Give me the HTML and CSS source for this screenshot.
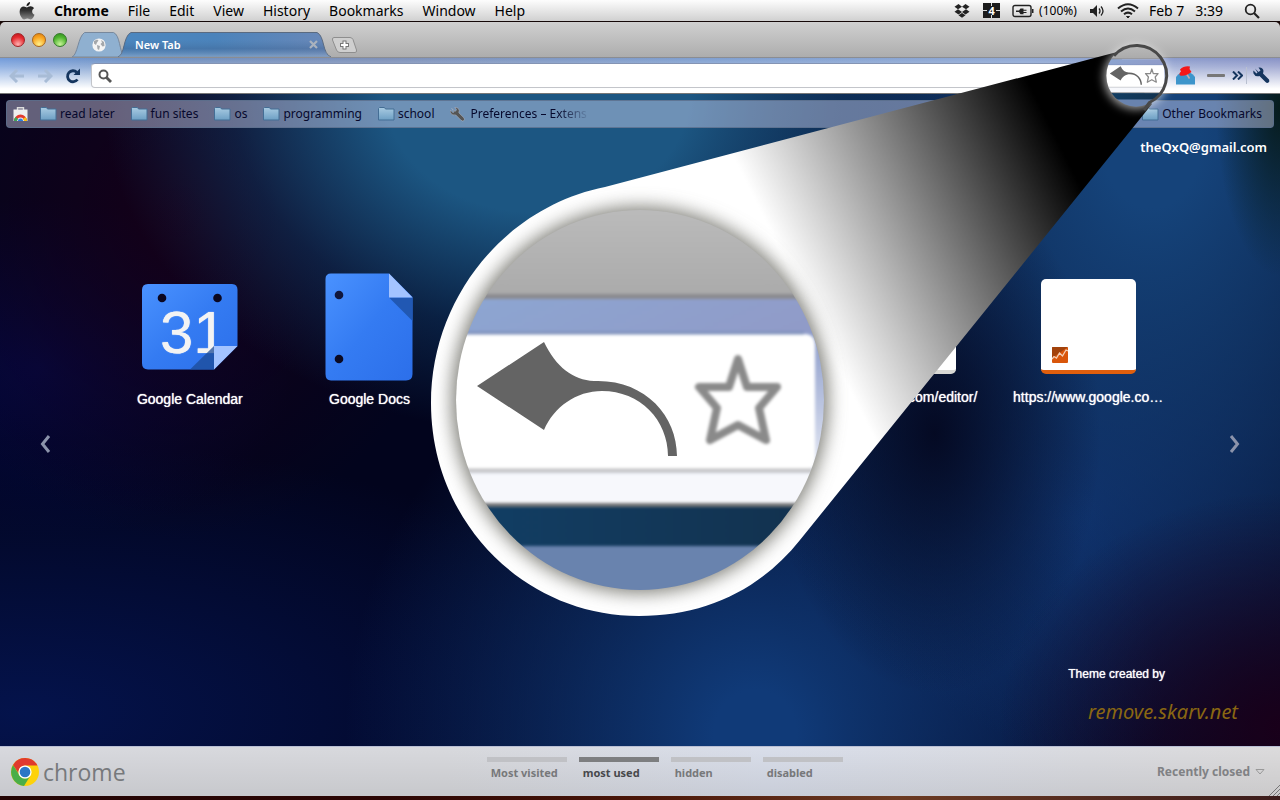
FILE: index.html
```html
<!DOCTYPE html>
<html lang="en">
<head>
<meta charset="utf-8">
<title>New Tab</title>
<link rel="stylesheet" href="styles.css">
</head>
<body>
<header class="menubar">
  <nav class="menus">
    <svg class="apple" width="16" height="18" viewBox="0 0 16 18"><defs><linearGradient id="ap" x2="0" y2="1"><stop offset="0" stop-color="#111"/><stop offset=".5" stop-color="#333"/><stop offset="1" stop-color="#888"/></linearGradient></defs><path fill="url(#ap)" d="M11 0C11.200 2 9.500 4.200 7.500 4.200C7.300 2.200 9 .3 11 0ZM7.800 5.400C8.600 5.400 9.800 4.300 11.600 4.300C12.900 4.300 14.200 5 15 6.200C12.300 7.800 12.700 11.600 15.500 12.700C14.700 14.900 13.300 17.400 11.700 17.400C10.400 17.400 10 16.600 8.400 16.600C6.700 16.600 6.300 17.400 5.100 17.400C3.100 17.400.6 13.300.6 9.800C.6 6.300 2.700 4.500 4.800 4.500C6.200 4.500 7.200 5.400 7.800 5.400Z"/></svg>
    <button class="menu strong">Chrome</button><button class="menu">File</button><button class="menu">Edit</button><button class="menu">View</button><button class="menu">History</button><button class="menu">Bookmarks</button><button class="menu">Window</button><button class="menu">Help</button>
  </nav>
  <div class="status">
    <svg width="18" height="16" viewBox="0 0 16 16" fill="#222"><path d="M4.500 1L8 3.700L4 6.300L.5 3.700ZM11.500 1L15.500 3.700L12 6.300L8 3.700ZM.5 8.700L4 6.300L8 8.900L4.500 11.400ZM15.500 8.700L12 6.300L8 8.900L11.500 11.400ZM4.500 12.300L8 9.900L11.500 12.300L8 14.800Z"/></svg>
    <span class="spaces">4</span>
    <svg width="22" height="14" viewBox="0 0 22 14"><rect x="1" y="1.500" width="18" height="11" rx="2" fill="none" stroke="#222" stroke-width="1.400"/><path d="M20 5h1.500v4H20zM4 6.500h3L8.500 4.500h3v1.300h3v1h-3v1.200h3v1h-3v1.300h-3L7 8H4z" fill="#222"/></svg>
    <span class="charge">(100%)</span>
    <svg class="sound" width="16" height="14" viewBox="0 0 16 14"><path d="M1 5h3l4-4v12L4 9H1z" fill="#222"/><path d="M10 4.500q2 2.500 0 5M12 2.500q4 4.500 0 9" fill="none" stroke="#222" stroke-width="1.300"/></svg>
    <svg width="22" height="16" viewBox="0 0 22 16" fill="none" stroke="#222" stroke-width="2"><path d="M1 5.500Q11-3 21 5.500M4 8.500Q11 2.500 18 8.500M7 11.300Q11 8 15 11.300"/><path d="M9.500 13.500h3L11 15z" fill="#222" stroke-width="1"/></svg>
    <span class="clock">Feb 7&nbsp;&nbsp; 3:39</span>
    <svg class="spot" width="16" height="16" viewBox="0 0 16 16" fill="none" stroke="#222" stroke-width="1.800"><circle cx="6.500" cy="6.500" r="4.800"/><path d="M10 10l5 5" stroke-width="2.200"/></svg>
  </div>
</header>

<div class="window">
  <div class="tabstrip">
    <div class="lights"><button class="light red" aria-label="Close"></button><button class="light amber" aria-label="Minimize"></button><button class="light green" aria-label="Zoom"></button></div>
    <button class="tab pinned" aria-label="Pinned tab">
      <svg class="tabshape" viewBox="0 0 56 25" preserveAspectRatio="none"><path d="M0 25C6 23 6 5 13 .5H43C50 3 49 19 54 25Z" fill="#8fb0d0" stroke="#76879b"/></svg>
      <svg class="globe" width="14" height="14" viewBox="0 0 14 14"><circle cx="7" cy="7" r="6.600" fill="#f4f4f4"/><path d="M2 3l3-1.500 1.500 1L5 4.500 4 7 2 5.500zM5 7l3 1-1 4-1.500-1zM9 2l3 2 .5 4-2 .5L8.500 6 10 4.500z" fill="#a3a7ab"/></svg>
    </button>
    <div class="tab active">
      <svg class="tabshape" viewBox="0 0 214 25" preserveAspectRatio="none"><defs><linearGradient id="tb" x2="1"><stop offset="0" stop-color="#4b87c0"/><stop offset=".45" stop-color="#4b83bb"/><stop offset="1" stop-color="#6a88b8"/></linearGradient><linearGradient id="ts" x2="0" y2="1"><stop offset=".3" stop-color="#47739f" stop-opacity="0"/><stop offset=".65" stop-color="#3e6290" stop-opacity=".4"/><stop offset="1" stop-color="#9db5d3" stop-opacity=".6"/></linearGradient></defs><path d="M0 25C7 23 5 4 13 .5H199C207 4 204 22 213 25Z" fill="url(#tb)" stroke="#5a6a80"/><path d="M0 25C7 23 5 4 13 .5H199C207 4 204 22 213 25Z" fill="url(#ts)"/></svg>
      <span class="tabname">New Tab</span><button class="tabclose" aria-label="Close tab"><svg width="9" height="9" viewBox="0 0 9 9"><path d="M1 1l7 7M8 1L1 8" stroke="#aab2bd" stroke-width="2.200"/></svg></button>
    </div>
    <button class="newtab" aria-label="New tab"><svg width="28" height="17" viewBox="0 0 28 17"><path d="M4 .5H20Q22 .5 23 2.500L26.500 13Q27 15.500 25 15.500H10Q7.500 15.500 6.500 13L2.500 3Q2 .5 4 .5Z" fill="#cfcfcf" stroke="#8e8e8e"/><path d="M14.500 3.500v9M10 8h9" stroke="#777" stroke-width="4"/><path d="M14.500 4.500v7M11 8h7" stroke="#fff" stroke-width="2"/></svg></button>
  </div>

  <div class="toolbar">
    <button class="tool" aria-label="Back"><svg width="16" height="14" viewBox="0 0 16 14" fill="none" stroke="#a8bcd6" stroke-width="3"><path d="M8 1L2 7l6 6M2 7h13"/></svg></button>
    <button class="tool" aria-label="Forward"><svg width="16" height="14" viewBox="0 0 16 14" fill="none" stroke="#a8bcd6" stroke-width="3"><path d="M8 1l6 6-6 6M14 7H1"/></svg></button>
    <button class="tool" aria-label="Reload"><svg width="16" height="16" viewBox="0 0 16 16"><path d="M12.500 11.500A5.500 5.500 0 1 1 11.800 4.200" fill="none" stroke="#15355e" stroke-width="2.800"/><path d="M15 .5V7H8.500z" fill="#15355e"/></svg></button>
    <label class="omnibox"><svg width="14" height="14" viewBox="0 0 14 14" fill="none" stroke="#555"><circle cx="5.500" cy="5.500" r="4" stroke-width="2"/><path d="M8.500 8.500l4.500 4.500" stroke-width="2.800"/></svg><input type="text" aria-label="Address"></label>
    <div class="extensions">
      <button class="tool" aria-label="Pin"><svg width="19" height="19" viewBox="0 0 19 19"><path d="M0 18.500V11Q4 5.500 9.500 5.500Q15 5.500 19 11V18.500Z" fill="#3d95cb"/><path d="M10 7l3.500 5.500" stroke="#c9a9a9" stroke-width="1.500"/><path d="M4 3.500Q8-.5 14 .5L13.500 3L15.500 6Q10 10.500 4 9.500Q2.500 7.500 5 5.500Z" fill="#f41818"/></svg></button>
      <button class="tool dash" aria-label="Extension"><svg width="18" height="4" viewBox="0 0 18 4"><rect width="18" height="3" rx="1" fill="#777"/></svg></button>
      <button class="tool" aria-label="More extensions"><svg width="11" height="9" viewBox="0 0 11 9" fill="none" stroke="#15355e" stroke-width="2"><path d="M1 .5l4 4-4 4M6 .5l4 4-4 4"/></svg></button>
      <span class="divider"></span>
      <button class="tool" aria-label="Settings"><svg width="17" height="17" viewBox="0 0 17 17"><path d="M2 1.500L5.500 5L7.500 3.500L5.500.5Q10 0 10.500 4L10 6.500L16 12.500Q17 14.500 15.500 15.500Q14 16.500 12.500 15L6.500 9Q2 10 .5 6.500Q0 4.500.5 3.500L3.500 6.500L4.500 5.500Z" fill="#15355e"/></svg></button>
    </div>
  </div>

  <svg class="defs" width="0" height="0"><defs><linearGradient id="fg" x2="0" y2="1"><stop offset="0" stop-color="#a9cbe2"/><stop offset="1" stop-color="#6d9fc4"/></linearGradient><symbol id="folder" viewBox="0 0 17 14"><path d="M.5 13V1.500L1.500.5H6.500L7.500 2H16V13Z" fill="url(#fg)" stroke="#446e95"/></symbol></defs></svg>

  <main class="page">
    <nav class="bookmarks">
      <a class="store" href="#" aria-label="Web Store"><svg width="15" height="15" viewBox="0 0 15 15"><path d="M4.500 3V.8h6V3" fill="none" stroke="#ddd" stroke-width="1.400"/><path d="M.5 2.500h14v11.500H.5z" fill="#eee"/><path d="M1 14a6.500 6.500 0 0 1 13 0h-3a3.500 3.500 0 0 0-7 0z" fill="#e33b2e"/><path d="M1 14a6.500 6.500 0 0 1 1.500-4L5 12q-1 1-1 2z" fill="#3aa757"/><path d="M14 14a6.500 6.500 0 0 0-1.500-4L10 12q1 1 1 2z" fill="#fbc116"/><path d="M5 14a2.500 2.500 0 0 1 5 0z" fill="#2d7de0"/></svg></a>
      <a href="#"><svg width="17" height="14"><use href="#folder" width="17" height="14"/></svg>read later</a>
      <a href="#"><svg width="17" height="14"><use href="#folder" width="17" height="14"/></svg>fun sites</a>
      <a href="#"><svg width="17" height="14"><use href="#folder" width="17" height="14"/></svg>os</a>
      <a href="#"><svg width="17" height="14"><use href="#folder" width="17" height="14"/></svg>programming</a>
      <a href="#"><svg width="17" height="14"><use href="#folder" width="17" height="14"/></svg>school</a>
      <a href="#" class="prefs"><svg width="15" height="15" viewBox="0 0 17 17"><path d="M2 1.500L5.500 5L7.500 3.500L5.500.5Q10 0 10.500 4L10 6.500L16 12.500Q17 14.500 15.500 15.500Q14 16.500 12.500 15L6.500 9Q2 10 .5 6.500Q0 4.500.5 3.500L3.500 6.500L4.500 5.500Z" fill="#555" stroke="#b5bccb" stroke-width=".6"/></svg><span class="fade">Preferences – Extens</span></a>
      <a href="#" class="other"><svg width="17" height="14"><use href="#folder" width="17" height="14"/></svg>Other Bookmarks</a>
    </nav>
    <a class="account" href="#">theQxQ@gmail.com</a>

    <section class="apps">
      <button class="pager" aria-label="Previous"><svg width="12" height="20" viewBox="0 0 12 20"><path d="M10 2L3.500 10L10 18" fill="none" stroke="#8b93ab" stroke-width="3"/></svg></button>
      <div class="tiles">
        <a class="tile app" href="#"><span class="art"><svg width="96" height="86" viewBox="0 0 96 86"><defs><linearGradient id="bl" x2="1" y2="1"><stop offset="0" stop-color="#4a92ff"/><stop offset=".5" stop-color="#347bf2"/><stop offset="1" stop-color="#2c6fea"/></linearGradient></defs><path d="M6 0H90Q95.500 0 95.500 6V62L72 85.500H6Q0 85.500 0 79V6Q0 0 6 0Z" fill="url(#bl)"/><circle cx="20" cy="14" r="4.300" fill="#0b0720"/><circle cx="75.500" cy="14" r="4.300" fill="#0b0720"/><text class="date" x="18" y="69">31</text><path d="M72 62V85.500H48Z" fill="#1c4b96" fill-opacity=".75"/><path d="M72 62H95.500L72 85.500Z" fill="#a3c3ff"/></svg></span>Google Calendar</a>
        <a class="tile app" href="#"><span class="art"><svg width="88" height="108" viewBox="0 0 88 108"><path d="M6 .5H64L87.500 24V101Q87.500 107.500 81 107.500H6Q.5 107.500.5 101V6Q.5.5 6 .5Z" fill="url(#bl)"/><circle cx="14" cy="22" r="4.300" fill="#10163c"/><circle cx="14" cy="86" r="4.300" fill="#0b0a22"/><path d="M64 24.500H87.500V48Z" fill="#2158b3"/><path d="M64 .5L87.500 24.500H64Z" fill="#a3c3ff"/></svg></span>Google Docs</a>
        <a class="tile editor" href="#"><span class="art"><span class="card"></span></span>.com/editor/</a>
        <a class="tile" href="#"><span class="art"><span class="card analytics"><svg width="16" height="16" viewBox="0 0 16 16"><rect width="16" height="16" rx="1" fill="#d9560b"/><path d="M0 0H16L0 11Z" fill="#8a3b0c" fill-opacity=".7"/><path d="M0 12l2-2.500 2.500 1.500L7.500 6l3 3L14 3l2 1" fill="none" stroke="#f3d0b8" stroke-width="1.300"/></svg></span></span>https://www.google.co…</a>
      </div>
      <button class="pager" aria-label="Next"><svg width="12" height="20" viewBox="0 0 12 20"><path d="M2 2L8.500 10L2 18" fill="none" stroke="#8b93ab" stroke-width="3"/></svg></button>
    </section>

    <div class="credit"><span>Theme created by</span><a href="#">remove.skarv.net</a></div>
  </main>

  <footer class="dock">
    <div class="brand"><svg width="28" height="28" viewBox="0 0 28 28"><circle cx="14" cy="14" r="14" fill="#fdd20b"/><path d="M2 7A14 14 0 0 1 26.500 7.500H14A6.500 6.500 0 0 0 7.700 15.500Z" fill="#e03a2d"/><path d="M2 7A14 14 0 0 0 13 28L19.500 17.500A6.500 6.500 0 0 1 8 16.500Z" fill="#4aae48"/><circle cx="14" cy="14" r="6.600" fill="#fff"/><circle cx="14" cy="14" r="5.300" fill="#2b77c5"/></svg><span>chrome</span></div>
    <nav class="sections"><button>Most visited</button><button class="on">most used</button><button>hidden</button><button>disabled</button></nav>
    <button class="recent">Recently closed<svg width="10" height="6" viewBox="0 0 10 6"><path d="M1 .5H9L5 5Z" fill="none" stroke="#999"/></svg></button>
    <svg class="grip" width="12" height="12" viewBox="0 0 12 12" stroke="#777"><path d="M1 12L12 1M5 12L12 5M9 12L12 9"/></svg>
  </footer>
</div>

<svg class="magnifier" viewBox="0 0 1280 800" aria-hidden="true">
  <defs>
    <linearGradient id="beam" gradientUnits="userSpaceOnUse" x1="745" y1="180" x2="1011" y2="47"><stop offset="0" stop-color="#fff"/><stop offset="1" stop-color="#000"/></linearGradient>
    <linearGradient id="strip" x2="0" y2="1"><stop offset="0" stop-color="#bebebe"/><stop offset="1" stop-color="#aaa"/></linearGradient>
    <linearGradient id="blue" x2="1" y2=".2"><stop offset="0" stop-color="#8ca6d2"/><stop offset="1" stop-color="#909bc8"/></linearGradient>
    <linearGradient id="side" x2="0" y2="1"><stop offset="0" stop-color="#8c9cca"/><stop offset="1" stop-color="#fafbfe"/></linearGradient>
    <linearGradient id="navy" x2="1"><stop offset="0" stop-color="#113f66"/><stop offset="1" stop-color="#12304c"/></linearGradient>
    <filter id="soft" x="-20%" y="-20%" width="140%" height="140%" color-interpolation-filters="sRGB"><feGaussianBlur stdDeviation="1.500"/></filter>
    <filter id="shade" x="-20%" y="-20%" width="140%" height="140%"><feGaussianBlur stdDeviation="9"/></filter>
    <filter id="glow" x="-50%" y="-50%" width="200%" height="200%"><feGaussianBlur stdDeviation="5"/></filter>
    <clipPath id="disc"><ellipse cx="640" cy="400" rx="184" ry="190"/></clipPath>
    <clipPath id="body"><path d="M1117 52L605 187C505 207 431 298 431 403C431 522 524 616 639 616C705 616 760 590 800 540L1152 104Z"/></clipPath>
    <g id="view" clip-path="url(#disc)"><g filter="url(#soft)">
      <rect x="440" y="190" width="400" height="107" fill="url(#strip)"/>
      <rect x="440" y="294" width="400" height="5" fill="#8b8b90"/>
      <rect x="440" y="299" width="400" height="36" fill="url(#blue)"/>
      <rect x="440" y="333" width="400" height="170" fill="url(#side)"/>
      <rect x="440" y="474" width="400" height="30" fill="#f7f8fc"/>
      <path d="M430 334H804Q815 334 815 345V460Q815 470 804 470H430Z" fill="#fff"/>
      <path d="M430 333H804" stroke="#7f91bb" stroke-width="3"/>
      <path d="M430 470.500H812" stroke="#c4c4c6" stroke-width="4"/>
      <rect x="440" y="503" width="400" height="5" fill="#747678"/>
      <rect x="440" y="507" width="400" height="42" fill="url(#navy)"/>
      <rect x="440" y="546" width="400" height="60" fill="#6983ae"/>
      <path d="M738 359L747 387H777L759 408L766 440L738 425L710 440L717 408L699 387H729Z" fill="none" stroke="#8a8a8a" stroke-width="8" stroke-linejoin="round"/>
    </g><path d="M477 386L544 342C556 367 573 380 594 381C644 379 677 415 677 456H668C668 420 640 391 602 391C576 391 554 407 544 430Z" fill="#646464"/></g>
  </defs>
  <path d="M1117 52L605 187C505 207 431 298 431 403C431 522 524 616 639 616C705 616 760 590 800 540L1152 104Z" fill="url(#beam)"/>
  <g clip-path="url(#body)"><ellipse cx="640" cy="400" rx="188" ry="193" fill="#7d7d76" filter="url(#shade)"/></g>
  <use href="#view"/>
  <circle cx="1136" cy="77" r="32" fill="#fff" fill-opacity=".65" filter="url(#glow)"/>
  <use href="#view" transform="matrix(.161 0 0 .163 1033 10.500)"/>
  <path d="M1114 55.700A30 30 0 1 1 1149.500 102.500L1144 110" fill="none" stroke="#484848" stroke-width="3"/>
</svg>
<div class="desktop"></div>
</body>
</html>
```

FILE: styles.css
```css
* { box-sizing: border-box; }
body {
  margin: 0;
  min-height: 100vh;
  display: flex;
  flex-direction: column;
  position: relative;
  background: #1a0806;
  font-family: "Noto Sans", "Open Sans", sans-serif;
  overflow-x: hidden;
}
button { border: 0; padding: 0; background: none; font: inherit; color: inherit; }
a { color: inherit; text-decoration: none; }
svg { display: block; flex: none; }
.defs { position: absolute; }

.menubar {
  height: 22px;
  display: flex;
  justify-content: space-between;
  align-items: center;
  padding: 0 20px 0 19px;
  background: linear-gradient(#fdfdfd, #d0d0d0);
  border-bottom: 1px solid #150808;
  font-size: 14px;
  line-height: 20px;
  color: #000;
  white-space: nowrap;
}
.menus, .status { display: flex; align-items: center; }
.menus { gap: 19px; }
.strong { font-weight: 700; }
.status { gap: 12px; }
.spaces {
  width: 17px;
  height: 15px;
  background:
    linear-gradient(#ddd, #ddd) 50% 0 / 1px 3px no-repeat,
    linear-gradient(#ddd, #ddd) 50% 100% / 1px 3px no-repeat,
    linear-gradient(#ddd, #ddd) 0 50% / 4px 1px no-repeat,
    linear-gradient(#ddd, #ddd) 100% 50% / 4px 1px no-repeat,
    #1c1c1c;
  color: #fff;
  font-size: 11px;
  line-height: 15px;
  font-weight: 700;
  text-align: center;
}
.charge { font-size: 12px; margin-left: -7px; }
.clock { margin: 0 9px 0 -2px; }

.window { flex: 1; display: flex; flex-direction: column; }
.tabstrip {
  height: 36px;
  display: flex;
  align-items: flex-end;
  padding-left: 11px;
  background: linear-gradient(#d0d0d0, #adadad);
  border-radius: 5px 5px 0 0;
  border-bottom: 1px solid #8b8d92;
}
.lights { display: flex; gap: 7px; align-self: center; margin-right: 5px; }
.light { width: 14px; height: 14px; border-radius: 50%; border: 1px solid; }
.red { background: radial-gradient(circle at 50% 85%, #ffb0b0, #e52b30 60%, #b9141b); border-color: #a02226; }
.amber { background: radial-gradient(circle at 50% 85%, #fff08a, #f9a41f 60%, #d97b10); border-color: #a8661c; }
.green { background: radial-gradient(circle at 50% 85%, #c9f59a, #4fb52f 60%, #2e8a1f); border-color: #337a2a; }
.tab { position: relative; height: 25px; display: flex; align-items: center; }
.tabshape { position: absolute; inset: 0; width: 100%; height: 100%; }
.pinned { width: 54px; justify-content: center; }
.globe { position: relative; }
.active { width: 214px; margin-left: -8px; padding: 0 14px 0 17px; justify-content: space-between; }
.tabname, .tabclose { position: relative; }
.tabname { color: #fff; font-size: 11px; font-weight: 600; line-height: 16px; }
.newtab { align-self: flex-end; padding-bottom: 3px; margin-left: -2px; }

.toolbar {
  height: 36px;
  display: flex;
  align-items: center;
  padding: 0 10px 0 9px;
  gap: 12px;
  background:
    linear-gradient(rgba(255,255,255,0) 0%, rgba(255,255,255,.25) 25%, #fff 88%),
    linear-gradient(90deg, #729bda, #6e8fc0 12%, #7d90b8 30%, #7f9fd0 55%, #8fa8d4 80%, #8892c6);
  border-bottom: 1px solid #777;
}
.omnibox {
  flex: 1;
  height: 25px;
  margin-left: -2px;
  display: flex;
  align-items: center;
  padding-left: 6px;
  background: #fff;
  border: 1px solid #c3c5ca;
  border-top-color: #8494b4;
  border-radius: 4px;
}
.omnibox input { flex: 1; min-width: 0; border: 0; background: none; outline: 0; font-size: 14px; }
.extensions { display: flex; align-items: center; gap: 7px; margin-left: -3px; }
.dash { margin: 0 0 0 5px; }
.divider { width: 1px; height: 17px; background: #b9c0d0; margin: 0 -1px 0 -4px; }

.page {
  flex: 1;
  display: flex;
  flex-direction: column;
  padding: 6px 6px 0;
  color: #fff;
  background:
    radial-gradient(ellipse 5% 26% at 100% 2%, #071c1c, rgba(7,28,28,0)),
    radial-gradient(ellipse 22% 36% at 100% 97%, #19001a, rgba(20,0,26,0)),
    radial-gradient(ellipse 13% 40% at 73% 52%, rgba(4,8,32,.95), rgba(4,8,32,0)),
    radial-gradient(ellipse 34% 52% at 42% 0%, #1c5682 35%, rgba(18,66,112,.45) 70%, rgba(12,40,80,0)),
    radial-gradient(ellipse 22% 50% at 14% 18%, rgba(22,0,24,.95), rgba(14,2,24,0)),
    radial-gradient(ellipse 38% 95% at 90% 8%, #15437a 10%, rgba(14,52,108,0)),
    radial-gradient(ellipse 32% 66% at 59% 98%, #103a78 10%, rgba(14,52,112,0)),
    radial-gradient(ellipse 24% 50% at 84% 65%, #0b2560, rgba(8,30,90,0)),
    radial-gradient(ellipse 20% 26% at 3% 42%, #030842, rgba(3,8,66,0)),
    radial-gradient(ellipse 50% 42% at 2% 95%, #04134c, rgba(4,19,76,0)),
    #02041d;
}
.bookmarks {
  height: 28px;
  display: flex;
  align-items: center;
  gap: 16px;
  padding: 0 11px 0 6px;
  background: rgba(225,226,255,.42);
  border: 1px solid rgba(90,110,140,.8);
  border-radius: 4px;
  color: #06082c;
  font-size: 12px;
  line-height: 16px;
  white-space: nowrap;
}
.bookmarks a { display: flex; align-items: center; gap: 3px; }
.bookmarks .store { margin-right: -4px; }
.bookmarks .prefs { gap: 5px; }
.fade { background: linear-gradient(90deg, #06082c 75%, rgba(6,8,44,.1)); background-clip: text; color: transparent; }
.bookmarks .other { margin-left: auto; }
.account { align-self: flex-end; margin: 9px 7px 0 0; font-size: 13px; font-weight: 600; line-height: 20px; }

.apps { display: flex; align-items: flex-end; margin: 113px -6px 0; }
.pager { width: 90px; height: 32px; display: flex; align-items: center; justify-content: center; }
.tiles {
  flex: 1;
  display: grid;
  grid-template-columns: repeat(6, 1fr);
  padding: 0 12px 52px 10px;
  font-family: "Liberation Sans", Arial, sans-serif;
  font-size: 14px;
  line-height: 18px;
}
.tile { display: flex; flex-direction: column; align-items: center; gap: 6px; text-shadow: 0 0 1px #fff; }
.app { gap: 7px; padding-top: 1px; }
.art { height: 112px; display: flex; align-items: center; }
.editor { grid-column: 5; align-items: flex-end; padding-right: 21px; }
.editor, .tile:last-child { white-space: nowrap; }
.editor .art { align-self: center; margin-right: -21px; }
.card {
  width: 95px;
  height: 95px;
  display: flex;
  align-items: flex-end;
  padding: 0 0 7px 11px;
  background: #fff;
  border-radius: 5px;
  border-bottom: 4px solid #d8d8d4;
}
.analytics { border-bottom-color: #e05f0d; }
.date { font-family: "Liberation Sans", Arial, sans-serif; font-size: 60px; fill: #f3f3f3; }

.credit { margin: auto 36px 22px auto; display: flex; flex-direction: column; align-items: flex-end; }
.credit span { font-family: "Liberation Sans", Arial, sans-serif; font-size: 12px; line-height: 18px; margin: 0 73px 17px 0; text-shadow: 0 0 1px #fff; }
.credit a { font-size: 20px; font-style: italic; line-height: 24px; color: #8a6712; }

.dock {
  position: relative;
  height: 50px;
  display: grid;
  grid-template-columns: 38% auto 1fr;
  align-items: center;
  padding-right: 15px;
  border-top: 1px solid #b9bfd4;
  background: linear-gradient(rgba(0,0,0,0), rgba(0,0,0,.08)), linear-gradient(90deg, #d8d9de, #d8d9dd 35%, #d9deea 60%, #dadbe0 85%, #dcdbdc);
}
.brand { display: flex; align-items: center; gap: 4px; padding-left: 11px; font-family: "Open Sans", sans-serif; font-size: 23px; line-height: 28px; color: #77797c; }
.sections { display: flex; gap: 12px; align-self: start; padding: 10px 0 0 6px; font-size: 11px; font-weight: 700; color: #77787a; }
.sections button { width: 80px; padding: 2px 0 0 4px; text-align: left; line-height: 18px; border-top: 5px solid #c0c1c5; }
.sections .on { color: #47484b; border-color: #7d7e80; }
.recent { justify-self: end; display: flex; align-items: center; gap: 5px; font-size: 12px; font-weight: 700; color: #808184; }
.grip { position: absolute; right: 0; bottom: 0; }
.desktop { height: 4px; background: linear-gradient(90deg, #240504, #2c0604 30%, #4a1608 50%, #6c3a22 70%, #3c1d1c); }
.magnifier { position: absolute; left: 0; top: 0; width: 100%; pointer-events: none; }
```
